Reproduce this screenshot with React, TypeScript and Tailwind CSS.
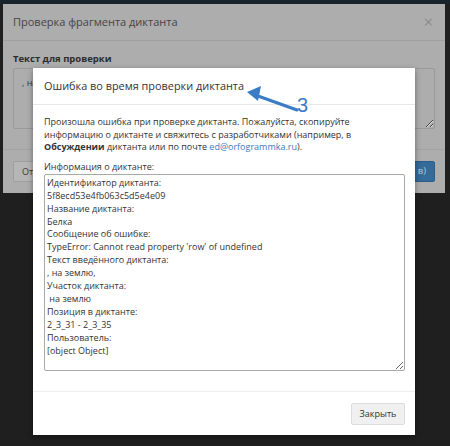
import React from 'react';

const info = [
  'Идентификатор диктанта:',
  '5f8ecd53e4fb063c5d5e4e09',
  'Название диктанта:',
  'Белка',
  'Сообщение об ошибке:',
  "TypeError: Cannot read property 'row' of undefined",
  'Текст введённого диктанта:',
  ', на землю,',
  'Участок диктанта:',
  ' на землю',
  'Позиция в диктанте:',
  '2_3_31 - 2_3_35',
  'Пользователь:',
  '[object Object]',
].join('\n');

function Annotation() {
  return (
    <svg className="absolute left-0 top-0 pointer-events-none" width="450" height="446">
      <path d="M297 110 L258 96" stroke="#3a7cc6" strokeWidth="3" strokeLinecap="round" />
      <polygon points="247,92 261,86 258,101" fill="#3a7cc6" />
    </svg>
  );
}

export default function App() {
  return (
    <div className="relative w-[450px] h-[446px] overflow-hidden bg-[#1f1f1f] text-[#333] font-['Open_Sans',sans-serif]">
      <div className="h-[4px] bg-[#18232c]" />

      {/* dimmed dialog underneath */}
      <div className="ml-[3px] w-[442px] h-[189px] bg-[#adadad] flex flex-col">
        <div className="h-[37px] flex items-center justify-between px-[10px] border-b border-[#9f9f9f]">
          <span className="text-[11px] text-[#454545]">Проверка фрагмента диктанта</span>
          <span className="text-[16px] leading-none text-[#8a8a8a] mr-[2px]">×</span>
        </div>
        <div className="px-[10px] pt-[10px] pb-[20px] border-b border-[#a3a3a3]">
          <div className="text-[9.5px] font-bold text-[#2c2c2c] leading-[15px]">Текст для проверки</div>
          <textarea
            readOnly
            value=", на землю,"
            className="block mt-[2px] w-[422px] h-[61px] bg-[#adadad] border border-[#9a9a9a] rounded-[2px] px-[8px] pt-[7px] text-[9px] leading-[13px] text-[#3a3a3a] outline-none"
          />
        </div>
        <div className="flex justify-between px-[10px] pt-[11px]">
          <div className="h-[21px] w-[60px] bg-[#b6b6b6] border border-[#9e9e9e] rounded-[2px] text-[9px] text-[#3a3a3a] flex items-center pl-[8px]">
            Отмена
          </div>
          <div className="h-[21px] w-[140px] bg-[#336b9a] border border-[#2b5d88] rounded-[2px] text-[9.5px] text-[#b3c7da] flex items-center justify-end pr-[8px]">
            в)
          </div>
        </div>
      </div>

      {/* error dialog */}
      <div className="absolute left-[33px] top-[68px] w-[382px] h-[367px] bg-white flex flex-col shadow-[0_2px_6px_rgba(0,0,0,0.4)]">
        <div className="h-[37px] flex items-center px-[11px] border-b border-[#e8e8e8]">
          <span className="text-[10.9px] text-[#333]">Ошибка во время проверки диктанта</span>
        </div>
        <div className="flex-1 px-[11px] pt-[11px]">
          <p className="text-[9px] leading-[12.6px] text-[#333]">
            Произошла ошибка при проверке диктанта. Пожалуйста, скопируйте
            <br />
            информацию о диктанте и свяжитесь с разработчиками (например, в
            <br />
            <b>Обсуждении</b> диктанта или по почте <span className="text-[#3b7ab8]">ed@orfogrammka.ru</span>).
          </p>
          <div className="mt-[7px] mb-[1px] text-[9px] leading-[12px] text-[#333]">Информация о диктанте:</div>
          <textarea
            readOnly
            value={info}
            className="block w-[361px] h-[197px] border border-[#a9a9a9] rounded-[2px] px-[2px] pt-[2px] text-[9px] leading-[12.9px] text-[#333] outline-none resize-y"
          />
        </div>
        <div className="h-[44px] border-t border-[#eeeeee] flex items-center justify-end px-[10px]">
          <button className="h-[22px] w-[54px] bg-[#f0f0f0] border border-[#dddddd] rounded-[2px] text-[9px] text-[#333]">
            Закрыть
          </button>
        </div>
      </div>

      <Annotation />
      <span className="absolute left-[297px] top-[93px] text-[20px] leading-[24px] text-[#3a7cc6] font-['Liberation_Sans',sans-serif]">
        3
      </span>
    </div>
  );
}
